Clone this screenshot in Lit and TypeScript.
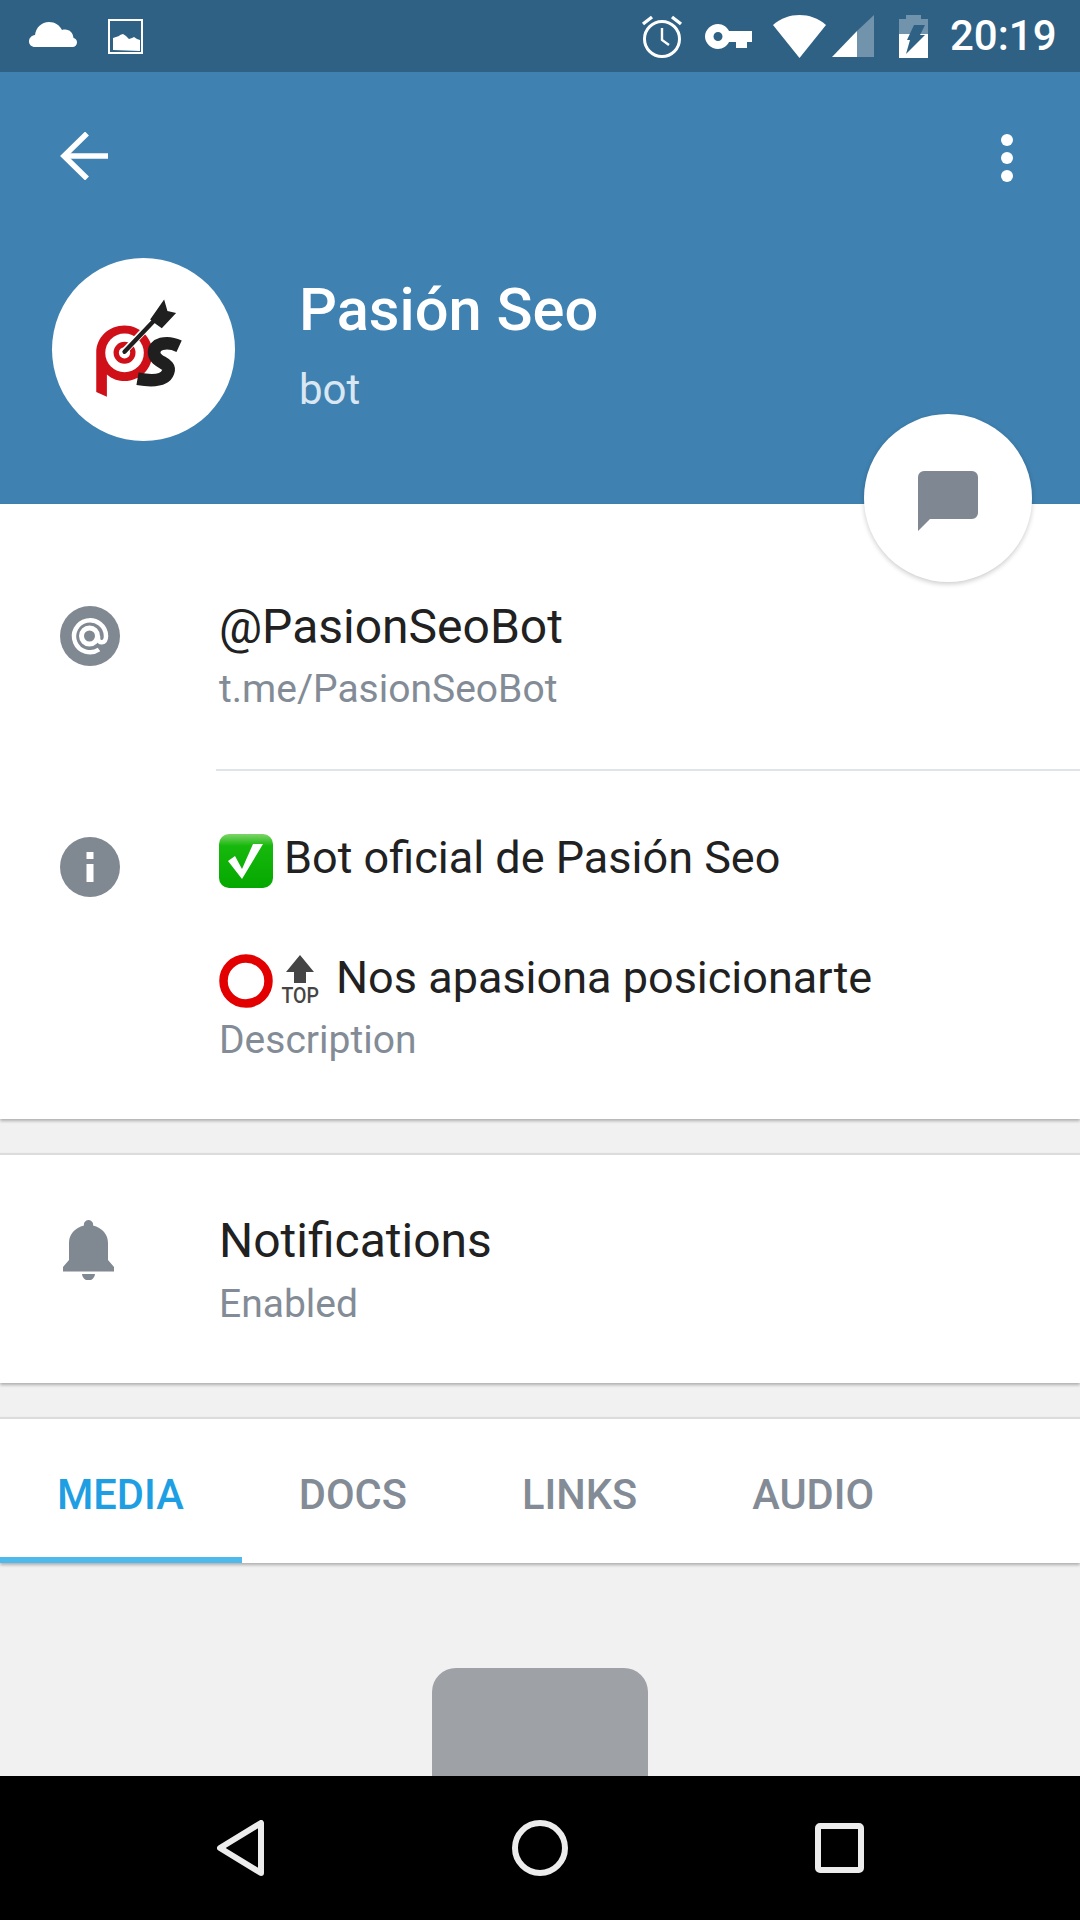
import { LitElement, html, css, svg } from "lit";
import { customElement } from "lit/decorators.js";

const check = html`<svg class="emoji" viewBox="0 0 54 54"><defs><linearGradient id="g" x1="0" y1="0" x2="0" y2="1"><stop offset="0" stop-color="#7fd46a"/><stop offset=".22" stop-color="#16b80c"/><stop offset="1" stop-color="#05a800"/></linearGradient></defs><rect width="54" height="54" rx="10" fill="url(#g)"/><path d="M9 27L16 22 23 35 34 10H44L23 45Z" fill="#fff"/></svg>`;
const ring = html`<svg class="emoji ring" viewBox="0 0 54 54"><circle cx="27" cy="27" r="22.5" fill="none" stroke="#e30000" stroke-width="8.500"/></svg>`;
const top = html`<svg class="top" viewBox="0 0 38 56"><path d="M19 1L33 18H25V29H13V18H5Z" fill="#454545"/><text x="0.5" y="42.600" transform="scale(1 1.150)" class="toptext">TOP</text></svg>`;

@customElement("app-root")
export class AppRoot extends LitElement {
  static styles = css`
    :host { display: flex; flex-direction: column; width: 1080px; height: 1920px; overflow: hidden; position: relative; background: #f1f1f1; font-family: Roboto, "Liberation Sans", sans-serif; }
    svg { display: block; flex: none; }
    .status { height: 72px; flex: none; background: #2f6185; display: flex; align-items: center; padding: 0 26px 0 29px; box-sizing: border-box; color: #fff; }
    .cloud { width: 48px; height: 25px; margin-right: 31px; margin-top: -3px; }
    .pic { width: 35px; height: 35px; }
    .spacer { flex: 1; }
    .alarm { width: 42px; height: 44px; margin-right: 22px; }
    .key { width: 47px; height: 25px; margin-right: 21px; }
    .wifi { width: 53px; height: 43px; margin-right: 6px; }
    .signal { width: 42px; height: 43px; margin-right: 25px; }
    .battery { width: 29px; height: 43px; margin-right: 22px; }
    .time { font-size: 42px; font-weight: 500; line-height: 72px; width: 104px; }
    .header { height: 432px; flex: none; background: #3f81b0; box-sizing: border-box; padding: 60px 67px 0 60px; }
    .bar { display: flex; justify-content: space-between; align-items: flex-start; height: 48px; }
    .back { width: 48px; height: 48px; }
    .dots { width: 12px; height: 48px; margin-top: 2px; }
    .profile { display: flex; align-items: center; margin: 78px 0 0 -8px; }
    .avatar { width: 183px; height: 183px; border-radius: 50%; background: #fff; flex: none; margin-right: 64px; overflow: hidden; }
    .avatar svg { width: 183px; height: 183px; }
    .name { font-size: 59.6px; font-weight: 500; color: #fff; line-height: 64px; }
    .role { font-size: 42px; color: #d9e7f2; line-height: 48px; margin: 24px 0 8px; }
    .fab { position: absolute; left: 864px; top: 414px; width: 168px; height: 168px; border-radius: 50%; background: #fff; box-shadow: 0 2px 5px rgba(0,0,0,.2); display: flex; align-items: center; justify-content: center; z-index: 2; }
    .fab svg { width: 60px; height: 60px; margin-top: 6px; }
    .card { background: #fff; flex: none; box-shadow: 0 2px 3px rgba(0,0,0,.28); position: relative; }
    .first { height: 615px; }
    .second { height: 228px; margin-top: 34px; border-top: 2px solid #dcdcdc; }
    .tabs { height: 144px; margin-top: 34px; border-top: 2px solid #dcdcdc; display: flex; }
    .row { display: flex; box-sizing: border-box; }
    .ico { width: 60px; height: 60px; margin: 0 99px 0 60px; flex: none; }
    .bell { width: 51px; height: 60px; margin: 9px 105px 0 63px; flex: none; }
    .one { height: 265px; padding-top: 93px; }
    .one .ico { margin-top: 9px; }
    .two { padding-top: 57px; }
    .two .ico { margin-top: 9px; }
    .three { padding-top: 56px; }
    .three .sub { margin-top: 3px; }
    .main { font-size: 48px; line-height: 60px; color: #212121; display: flex; align-items: center; }
    .main.small { font-size: 45px; }
    .sub { font-size: 39px; line-height: 60px; color: #838c96; margin-top: 2px; }
    .blank { height: 60px; }
    .divider { height: 2px; background: #dfe4e8; margin-left: 216px; }
    .emoji { width: 54px; height: 54px; margin: 6px 11px 0 0; }
    .ring { margin-right: 8px; }
    .top { width: 38px; height: 56px; margin: 6px 17px -2px 0; }
    .toptext { font-family: Roboto, sans-serif; font-size: 19.500px; font-weight: 500; fill: #454545; }
    .tab { font-size: 41.6px; font-weight: 500; color: #838c96; height: 144px; line-height: 152px; position: relative; flex: none; }
    .tab.on { color: #1e9fe3; }
    .tab.on::after { content: ""; position: absolute; left: -57px; bottom: 0; width: 242px; height: 6px; background: #4fb8ec; }
    .tabs .tab:nth-child(1) { margin-left: 57px; }
    .tabs .tab:nth-child(2) { margin-left: 115px; }
    .tabs .tab:nth-child(3) { margin-left: 115px; }
    .tabs .tab:nth-child(4) { margin-left: 115px; }
    .empty { flex: 1; display: flex; justify-content: center; align-items: flex-end; min-height: 0; }
    .thumb { width: 216px; height: 108px; background: #9ea1a5; border-radius: 24px 24px 0 0; }
    .nav { height: 144px; flex: none; background: #000; display: flex; align-items: center; padding-left: 217px; box-sizing: border-box; }
    .nav svg { stroke: #ececec; stroke-width: 6; fill: none; }
    .nb { width: 47px; height: 56px; }
    .nh { width: 56px; height: 56px; margin-left: 248px; }
    .ns { width: 49px; height: 50px; margin-left: 247px; }
  `;

  render() {
    return html`
      <div class="status">
        <svg class="cloud" viewBox="0 0 48 25"><path d="M6 25C2.500 25 0 22.500 0 19.500 0 16 2.500 13.500 6 13 7 5.500 12.500 0 20 0c6 0 10.500 3 13 8 1-.5 2-.5 3-.5 5 0 8 3.500 8.500 8.500C46.500 16.500 48 18 48 20.500 48 23 46 25 43.500 25Z" fill="#fff"/></svg>
        <svg class="pic" viewBox="0 0 35 35"><rect x="1" y="1" width="33" height="33" fill="none" stroke="#fff" stroke-width="2"/><path d="M5 31V19l6-2 0 0 1-1 3-1 3 2 3 3 3-1 2-1 3 2 3 1v11z" fill="#fff"/></svg>
        <div class="spacer"></div>
        <svg class="alarm" viewBox="0 0 42 44" fill="none" stroke="#fff"><circle cx="21" cy="25" r="17.500" stroke-width="3"/><path d="M21 14v12l7 5" stroke-width="2.400"/><path d="M2 10L11 3M40 10L31 3" stroke-width="3.400"/></svg>
        <svg class="key" viewBox="0 0 47 25"><path fill="#fff" fill-rule="evenodd" d="M13 0c5 0 9 3 11 7h23v11h-5v6h-11v-6h-7c-2 4-6 7-11 7C6 25 0 19 0 12.500S6 0 13 0zM13 8a4.500 4.500 0 100 9 4.500 4.500 0 000-9z"/></svg>
        <svg class="wifi" viewBox="0 0 53 43"><path d="M0 10C8 3 17 0 26.500 0S45 3 53 10L26.500 43z" fill="#fff"/></svg>
        <svg class="signal" viewBox="0 0 42 43"><path d="M42 0V42H25V16z" fill="#fff" fill-opacity=".32"/><path d="M25 16V42H0z" fill="#fff"/></svg>
        <svg class="battery" viewBox="0 0 29 43"><path d="M0 4H7V0H22V4H29V19H0z" fill="#fff" fill-opacity=".32"/><path d="M0 19H29V43H0z" fill="#fff"/><path d="M15 10H26L21 20H26L7 39 11 25H8Z" fill="#2f6185"/></svg>
        <div class="time">20:19</div>
      </div>
      <div class="header">
        <div class="bar">
          <svg class="back" viewBox="0 0 48 48" fill="none" stroke="#fff" stroke-width="5.500"><path d="M48 24H4"/><path d="M27 1.500L4 24l23 22.500"/></svg>
          <svg class="dots" viewBox="0 0 12 48" fill="#fff"><circle cx="6" cy="6" r="6"/><circle cx="6" cy="24" r="6"/><circle cx="6" cy="42" r="6"/></svg>
        </div>
        <div class="profile">
          <div class="avatar">
            <svg viewBox="65 55 550 550">
              ${svg`
                <path d="M198 340C198 293 236 258 283 258C330 258 367 296 367 340C367 388 330 425 283 425C265 425 248 420 230 405V472L198 458Z" fill="#cf1018"/>
                <circle cx="283" cy="340" r="58" fill="#fff"/>
                <circle cx="283" cy="340" r="33" fill="#cf1018"/>
                <circle cx="283" cy="340" r="17" fill="#fff"/>
                <path d="M283 335L375 238" stroke="#fff" stroke-width="20"/>
                <path d="M283 337L375 240" stroke="#1f1f1f" stroke-width="13" stroke-linecap="round"/>
                <path d="M402 180L412 214 438 220 395 266 378 254 360 240Z" fill="#1f1f1f"/>
                <path d="M447 320C410 303 368 312 372 342C376 372 425 368 414 398C404 426 362 425 322 418" fill="none" stroke="#1f1f1f" stroke-width="38"/>
              `}
            </svg>
          </div>
          <div>
            <div class="name">Pasión Seo</div>
            <div class="role">bot</div>
          </div>
        </div>
      </div>
      <div class="fab"><svg viewBox="0 0 60 60"><path d="M6 0H54A6 6 0 0 1 60 6V42A6 6 0 0 1 54 48H12L0 60V6A6 6 0 0 1 6 0Z" fill="#7f8892"/></svg></div>
      <div class="card first">
        <div class="row one">
          <svg class="ico" viewBox="0 0 60 60"><circle cx="30" cy="30" r="30" fill="#808892"/><circle cx="29.500" cy="30" r="8" fill="none" stroke="#fff" stroke-width="5"/><path d="M38 30v2c0 6 8 6 8-2a16 16 0 1 0-7 13.500" fill="none" stroke="#fff" stroke-width="4.500"/></svg>
          <div>
            <div class="main">@PasionSeoBot</div>
            <div class="sub">t.me/PasionSeoBot</div>
          </div>
        </div>
        <div class="divider"></div>
        <div class="row two">
          <svg class="ico" viewBox="0 0 60 60"><circle cx="30" cy="30" r="30" fill="#808892"/><rect x="26.500" y="15" width="7" height="7" fill="#fff"/><rect x="26.500" y="27" width="7" height="18" fill="#fff"/></svg>
          <div>
            <div class="main small">${check}<span>Bot oficial de Pasión Seo</span></div>
            <div class="blank"></div>
            <div class="main small">${ring}${top}<span>Nos apasiona posicionarte</span></div>
            <div class="sub">Description</div>
          </div>
        </div>
      </div>
      <div class="card second">
        <div class="row three">
          <svg class="bell" viewBox="0 0 51 60"><path d="M25.500 0a4.500 4.500 0 0 1 4.500 5.500C39 8 45 14 45 23V40L51 47V51.500H0V47L6 40V23C6 14 12 8 21 5.500A4.500 4.500 0 0 1 25.500 0ZM19 54H32A6.500 6.500 0 0 1 19 54Z" fill="#808892"/></svg>
          <div>
            <div class="main">Notifications</div>
            <div class="sub">Enabled</div>
          </div>
        </div>
      </div>
      <div class="card tabs">
        <div class="tab on">MEDIA</div>
        <div class="tab">DOCS</div>
        <div class="tab">LINKS</div>
        <div class="tab">AUDIO</div>
      </div>
      <div class="empty"><div class="thumb"></div></div>
      <div class="nav">
        <svg class="nb" viewBox="0 0 47 56"><path d="M44 3V53L3 28Z" stroke-linejoin="round"/></svg>
        <svg class="nh" viewBox="0 0 56 56"><circle cx="28" cy="28" r="25"/></svg>
        <svg class="ns" viewBox="0 0 49 50"><rect x="3" y="3" width="43" height="44" rx="2"/></svg>
      </div>
    `;
  }
}
